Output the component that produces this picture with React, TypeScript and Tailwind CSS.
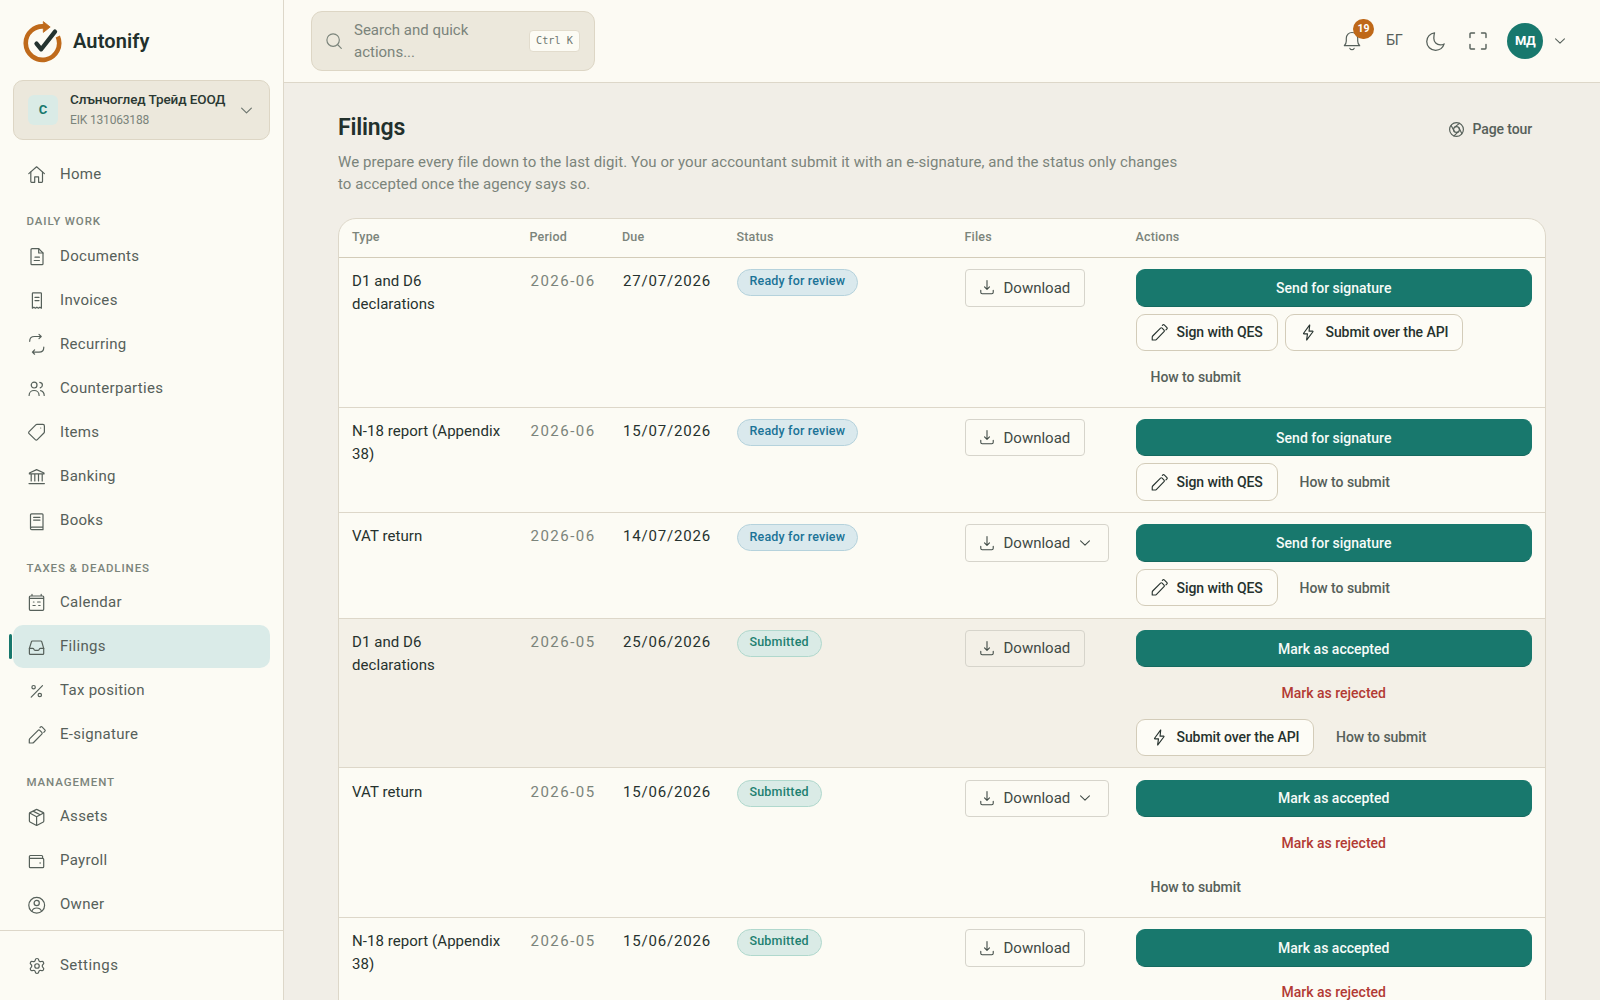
import React from 'react';
import { Settings } from 'lucide-react';

type IconProps = { className?: string; children?: React.ReactNode };

function Icon({ className = 'w-[18px] h-[18px]', children }: IconProps) {
  return (
    <svg
      viewBox="0 0 18 18"
      fill="none"
      stroke="currentColor"
      strokeWidth={1.2}
      strokeLinecap="round"
      strokeLinejoin="round"
      className={`shrink-0 overflow-visible ${className}`}
    >
      {children}
    </svg>
  );
}

const HomeIcon = () => (
  <Icon>
    <path d="M.8 8.6 8.6 1.8l7.8 6.8" />
    <path d="M2.8 7v9.6c0 .4.3.7.7.7h3.2v-5.4h3.9v5.4h3.2c.4 0 .7-.3.7-.7V7" />
  </Icon>
);
const DocumentIcon = () => (
  <Icon>
    <path d="M3 2.7c0-.6.4-1 1-1h6.7L15 6v10.7c0 .6-.4 1-1 1H4c-.6 0-1-.4-1-1z" />
    <path d="M10.7 1.7V6H15M7 10.2h4.4M6.2 13.5h5.2" />
  </Icon>
);
const InvoiceIcon = () => (
  <Icon>
    <path d="M4.4 17.2V2.6c0-.4.3-.7.7-.7h7.6c.4 0 .7.3.7.7v14.6l-1.5-1-1.5 1-1.5-1-1.5 1-1.5-1z" />
    <path d="M7 6.4h4M7 9.6h4" />
  </Icon>
);
const RecurringIcon = () => (
  <Icon>
    <path d="M1.7 6.3c0-3 1.9-4.8 4.8-4.8H13M11-.6l2.2 2.1L11 3.6" />
    <path d="M15.8 12.2c0 3-1.9 4.9-4.8 4.9H4.4M6.6 14.9l-2.2 2.2 2.2 2.1" />
  </Icon>
);
const PeopleIcon = () => (
  <Icon>
    <circle cx="6.1" cy="6.1" r="2.9" />
    <path d="M1.1 16.4c0-3 2.2-4.9 5-4.9s5 1.9 5 4.9M11.8 3.3c1.8.3 2.6 1.4 2.6 2.8s-.8 2.4-2.2 2.8M12.6 11.6c2.2.6 3.6 2.4 3.6 4.8" />
  </Icon>
);
const TagIcon = () => (
  <Icon>
    <path d="M1.1 8.7 7.8 1.9c.3-.3.7-.5 1.1-.5h6c.9 0 1.5.6 1.5 1.5v6c0 .4-.2.8-.5 1.1l-6.6 6.6c-.6.6-1.4.6-2 0l-6.2-6c-.6-.6-.6-1.3 0-1.9z" />
    <path d="M12.7 5h.01" />
  </Icon>
);
const BankIcon = () => (
  <Icon>
    <path d="M1.4 6.9V6l7.2-3.4L16 6v.9zM3.2 7v6.9M6.8 7v6.9M10.5 7v6.9M14.2 7v6.9M1 16.6h15.4" />
  </Icon>
);
const BookIcon = () => (
  <Icon>
    <path d="M2.5 2.9c0-.6.4-1 1-1h10.6c.5 0 .9.4.9.9v14.9H3.7c-.7 0-1.2-.5-1.2-1.2zM2.5 16.4c0-.7.5-1.2 1.2-1.2H15M5.6 5.3h6.4M5.6 8.1h6.4" />
  </Icon>
);
const CalendarIcon = () => (
  <Icon>
    <path d="M1.4 4c0-.6.4-1 1-1h12.3c.6 0 1 .4 1 1v12.3c0 .6-.4 1-1 1H2.4c-.6 0-1-.4-1-1zM1.4 5.3h14.3M4 1.4V3M13.2 1.4V3M5.4 9h.6M9.6 9h2.6M5 12.5h2.2M10.7 12.5h1.4" />
  </Icon>
);
const TrayIcon = () => (
  <Icon>
    <path d="M4.4 3h8.4c.5 0 .8.3 1 .8l1.9 6.6v5c0 .6-.4 1-1 1H2.4c-.6 0-1-.4-1-1v-5l2-6.6c.1-.5.5-.8 1-.8z" />
    <path d="M1.4 10.4h3.4c.5 0 .8.3 1 .7.3.8.7 1.2 1.3 1.2h3c.6 0 1-.4 1.3-1.2.2-.4.5-.7 1-.7h3.3" />
  </Icon>
);
const PercentIcon = () => (
  <Icon>
    <path d="M3.2 15.1 14.5 3.6" />
    <circle cx="5.6" cy="5.2" r="1.7" />
    <circle cx="11.8" cy="13" r="1.7" />
  </Icon>
);
const PenIcon = ({ className }: { className?: string }) => (
  <Icon className={className}>
    <path d="M1.3 17v-3c0-.5.2-1 .5-1.3l8.3-8.3c.5-.5 1.2-.5 1.7 0l2 2c.5.5.5 1.2 0 1.7L5.6 16.5c-.4.4-.8.5-1.3.5z" />
    <path d="M12 1.5l.6-.6c.4-.4 1-.4 1.4 0l2.9 2.9c.4.4.4 1 0 1.4l-1.1 1.1" />
  </Icon>
);
const BoxIcon = () => (
  <Icon>
    <path d="M8.1 1.6 2 4.6c-.4.2-.6.5-.6.9v7.6c0 .4.2.7.6.9l6.1 3.2c.4.2.7.2 1.1 0l6.1-3.2c.3-.2.5-.5.5-.9V5.5c0-.4-.2-.7-.5-.9l-6.1-3c-.4-.2-.7-.2-1.1 0zM1.7 5l6.9 3.7L15.600 5M8.6 8.700v8.600M5 3.1l7.200 3.700" />
  </Icon>
);
const WalletIcon = () => (
  <Icon>
    <path d="M1.4 6.4V4.5c0-.6.4-1 1-1h11.2c.6 0 1 .4 1 1v1.9M1.4 6.4h13.3c.6 0 1 .4 1 1v7.3c0 .6-.4 1-1 1H2.4c-.6 0-1-.4-1-1z" />
    <path d="M12.1 10.9h.01" strokeWidth={1.5} />
  </Icon>
);
const OwnerIcon = () => (
  <Icon>
    <circle cx="8.7" cy="9.3" r="7.9" />
    <circle cx="8.7" cy="7" r="2.6" />
    <path d="M3.9 15.1c.8-2 2.6-3.1 4.8-3.1s4 1.1 4.8 3.1" />
  </Icon>
);
const BoltIcon = ({ className }: { className?: string }) => (
  <Icon className={className}>
    <path d="M10.3 1 3.8 9.8c-.2.3 0 .6.3.6h3.8L7 17l6.7-8.8c.2-.3 0-.6-.3-.6H9.6z" />
  </Icon>
);
const DownloadIcon = () => (
  <Icon className="w-3.5 h-[15px]">
    <path d="M9 0v11.3M5.8 8.1 9 11.4l3.2-3.3M1 12.6v2.6c0 1 .8 1.8 1.8 1.8h12.4c1 0 1.8-.8 1.8-1.8v-2.6" strokeWidth={1.4} />
  </Icon>
);
const Chevron = ({ className = 'w-2.5 h-2.5' }: { className?: string }) => (
  <Icon className={className}>
    <path d="m1 5 8 8 8-8" strokeWidth={1.9} />
  </Icon>
);

const groups = [
  { title: '', items: [{ label: 'Home', icon: HomeIcon }] },
  {
    title: 'DAILY WORK',
    items: [
      { label: 'Documents', icon: DocumentIcon },
      { label: 'Invoices', icon: InvoiceIcon },
      { label: 'Recurring', icon: RecurringIcon },
      { label: 'Counterparties', icon: PeopleIcon },
      { label: 'Items', icon: TagIcon },
      { label: 'Banking', icon: BankIcon },
      { label: 'Books', icon: BookIcon },
    ],
  },
  {
    title: 'TAXES & DEADLINES',
    items: [
      { label: 'Calendar', icon: CalendarIcon },
      { label: 'Filings', icon: TrayIcon },
      { label: 'Tax position', icon: PercentIcon },
      { label: 'E-signature', icon: PenIcon },
    ],
  },
  {
    title: 'MANAGEMENT',
    items: [
      { label: 'Assets', icon: BoxIcon },
      { label: 'Payroll', icon: WalletIcon },
      { label: 'Owner', icon: OwnerIcon },
    ],
  },
];

type Filing = {
  type: string;
  period: string;
  due: string;
  status: 'review' | 'submitted';
  multiple?: boolean;
  highlighted?: boolean;
  actions: ('qes' | 'api' | 'how')[];
};

const filings: Filing[] = [
  { type: 'D1 and D6 declarations', period: '2026-06', due: '27/07/2026', status: 'review', actions: ['qes', 'api', 'how'] },
  { type: 'N-18 report (Appendix 38)', period: '2026-06', due: '15/07/2026', status: 'review', actions: ['qes', 'how'] },
  { type: 'VAT return', period: '2026-06', due: '14/07/2026', status: 'review', multiple: true, actions: ['qes', 'how'] },
  { type: 'D1 and D6 declarations', period: '2026-05', due: '25/06/2026', status: 'submitted', highlighted: true, actions: ['api', 'how'] },
  { type: 'VAT return', period: '2026-05', due: '15/06/2026', status: 'submitted', multiple: true, actions: ['how'] },
  { type: 'N-18 report (Appendix 38)', period: '2026-05', due: '15/06/2026', status: 'submitted', actions: ['how'] },
];

const columns = 'grid grid-cols-[177.5px_92.5px_114.5px_228px_171px_1fr]';

function Logo() {
  return (
    <svg viewBox="0 0 40 42" className="w-10 h-[42px] shrink-0" fill="none">
      <path d="M22 5.6A16.7 16.7 0 1 0 34.8 15.5" stroke="#bf6a1b" strokeWidth="4.6" />
      <path d="M20.3.6 27.2 6 20.3 11.4z" fill="#bf6a1b" stroke="#bf6a1b" strokeWidth=".8" strokeLinejoin="round" />
      <path d="m13.5 22.6 4.7 5.7L32 10.6" stroke="#24332f" strokeWidth="4.3" strokeLinecap="round" strokeLinejoin="round" />
    </svg>
  );
}

function Sidebar() {
  return (
    <aside className="w-[284px] h-full shrink-0 flex flex-col bg-[#fcfbf4] border-r border-[#ddd7c9]">
      <div className="flex items-center gap-2.5 h-20 pl-[23px] pt-1">
        <Logo />
        <span className="-mt-0.5 text-[20px] font-semibold tracking-[0.006em] text-[#22302c]">Autonify</span>
      </div>
      <button className="ml-[13px] w-[257px] h-[60px] shrink-0 flex items-center rounded-[10px] border border-[#ddd6c5] bg-[#ece8dc] pl-3.5 pr-[17px] text-left">
        <span className="w-[30px] h-[30px] flex items-center justify-center rounded-md bg-[#daebe6] text-[13px] font-bold text-[#18786d]">С</span>
        <span lang="bg" className="ml-3 -mt-px flex-1 whitespace-nowrap">
          <span className="block text-[13.5px] leading-[21px] font-medium tracking-[-0.008em] text-[#2a3833]">Слънчоглед Трейд ЕООД</span>
          <span className="block text-xs leading-5 tracking-[-0.014em] text-[#7b847b]">EIK 131063188</span>
        </span>
        <Chevron className="w-[11px] h-[11px] text-[#6d766f]" />
      </button>
      <nav className="flex-1 flex flex-col mt-[13px] ml-[13px] w-[257px]">
        {groups.map((group) => (
          <div key={group.title}>
            {group.title && (
              <p className="h-[39.5px] pt-[18px] pl-[13.5px] text-[11.5px] leading-4 font-medium tracking-[0.078em] text-[#7b847b]">{group.title}</p>
            )}
            <div className="flex flex-col gap-[1.7px]">
              {group.items.map((item) => (
                <a
                  key={item.label}
                  className={`relative h-[42.4px] flex items-center gap-3.5 rounded-[10px] pl-[15px] text-[15px] font-[450] tracking-[0.02em] text-[#56605a] ${
                    item.label === 'Filings' ? 'bg-[#daebe8]' : ''
                  }`}
                >
                  {item.label === 'Filings' && <span className="absolute -left-1 top-[9px] w-[3px] h-[25px] rounded-full bg-[#18786d]" />}
                  <item.icon />
                  <span>{item.label}</span>
                </a>
              ))}
            </div>
          </div>
        ))}
      </nav>
      <div className="h-[70px] shrink-0 border-t border-[#ddd7c9] flex items-center gap-3.5 pl-7 text-[15px] font-[450] tracking-[0.03em] text-[#56605a]">
        <Settings className="w-[18px] h-[18px]" strokeWidth={1.6} />
        <span>Settings</span>
      </div>
    </aside>
  );
}

function Header() {
  return (
    <header className="h-[83px] shrink-0 flex items-center justify-between border-b border-[#ddd7c9] bg-[#fcfaf3] pl-[27px] pr-[35px]">
      <div className="w-[284px] h-[60px] flex items-center rounded-[11px] border border-[#ddd6c5] bg-[#ece8dc] px-3.5">
        <Icon className="w-4 h-4 text-[#7b847b]">
          <circle cx="8" cy="8" r="7" strokeWidth={1.3} />
          <path d="m13.2 13.2 4 4" strokeWidth={1.3} />
        </Icon>
        <span className="ml-3 w-[150px] text-[15px] font-[450] leading-[22.5px] text-[#7b847b]">Search and quick actions...</span>
        <kbd className="ml-auto w-[51px] h-[22px] flex items-center justify-center rounded border border-[#e2dccd] bg-[#fcfbf4] font-['DejaVu_Sans_Mono',monospace] text-[10.2px] text-[#6d766f] whitespace-pre">Ctrl K</kbd>
      </div>
      <div className="flex items-center text-[#56605a]">
        <div className="relative w-[18px] h-[18px]">
          <Icon>
            <path d="M1.3 13.7h15.4c-1.4-1.3-2-2.5-2-4.6V6.3C14.7 3 12.2.5 9 .5S3.3 3 3.3 6.3v2.8c0 2.1-.6 3.3-2 4.6zM6.9 16.4c.4.8 1.1 1.2 2.1 1.2s1.7-.4 2.1-1.2" />
          </Icon>
          <span className="absolute left-2.5 -top-[13px] w-[21px] h-5 flex items-center justify-center rounded-full bg-[#bf6818] text-[10.5px] font-bold text-white">19</span>
        </div>
        <span className="ml-[25px] w-4 text-[14.5px] font-[450] tracking-[-0.02em]">БГ</span>
        <Icon className="ml-6 w-[19px] h-[19px]">
          <path d="M8.1.8C4 1.2.7 4.7.7 8.9c0 4.7 3.7 8.4 8.4 8.4 3.8 0 7-2.5 8.1-6-1.2.7-2.2.9-3.6.9-3.5 0-6.2-2.7-6.2-6.2 0-2 .1-3.5.7-5.2z" />
        </Icon>
        <Icon className="ml-6 w-[18px] h-[18px]">
          <path d="M1 5.5V1.9c0-.5.4-.9.9-.9h3.6M12.5 1h3.6c.5 0 .9.4.9.9v3.6M17 12.5v3.6c0 .5-.4.9-.9.9h-3.6M5.5 17H1.9c-.5 0-.9-.4-.9-.9v-3.6" strokeWidth={1.4} />
        </Icon>
        <span className="ml-5 w-9 h-9 flex items-center justify-center rounded-full bg-[#18786d] text-[13px] font-bold tracking-[-0.05em] text-white">МД</span>
        <Chevron className="ml-3 w-2.5 h-2.5" />
      </div>
    </header>
  );
}

const outlineButton =
  'h-[37.4px] flex items-center gap-[9px] rounded-[9px] border border-[#d3ccb9] bg-[#fdfcf6] px-3.5 text-sm font-medium text-[#26322e]';

function FilingRow({ filing }: { filing: Filing }) {
  const review = filing.status === 'review';
  return (
    <div className={`${columns} border-b border-[#ddd7c9] py-[11.3px] ${filing.highlighted ? 'bg-[#f3f0e7]' : ''}`}>
      <div className="pl-[13px] pr-3 pt-px text-[15px] font-[450] leading-[23px] tracking-[0.004em] text-[#26322e]">{filing.type}</div>
      <div className="pl-3.5 pt-px text-[15px] leading-[23px] tracking-[0.1em] text-[#7b847b]">{filing.period}</div>
      <div className="pl-3.5 pt-px text-[15px] leading-[23px] tracking-[0.055em] text-[#26322e]">{filing.due}</div>
      <div className="pl-[13px]">
        <span
          className={`flex w-fit h-[27px] items-center rounded-full border px-3 text-[12.5px] font-medium tracking-[0.014em] whitespace-nowrap ${
            review ? 'border-[#b5d2dc] bg-[#dae9ed] text-[#1b7397]' : 'border-[#b0d8cd] bg-[#daebe6] text-[#1d8070]'
          }`}
        >
          <span className="-mt-0.5">{review ? 'Ready for review' : 'Submitted'}</span>
        </span>
      </div>
      <div className="pl-[13px]">
        <button
          className={`h-[37.4px] flex items-center gap-2.5 rounded border border-[#d6d4cb] pl-3.5 text-[15px] font-[450] text-[#3f4a45] ${
            filing.multiple ? 'w-36' : 'w-[120px]'
          }`}
        >
          <DownloadIcon />
          <span>Download</span>
          {filing.multiple && <Chevron className="w-2.5 h-2.5" />}
        </button>
      </div>
      <div className="pl-[13px] pr-[13px] flex flex-wrap gap-[7px]">
        <button className="w-full h-[37.4px] rounded-[9px] border border-[#15695f] border-t-[#18786d] border-x-[#18786d] bg-[#18786d] text-sm font-medium text-[#f6fbf8]">
          {review ? 'Send for signature' : 'Mark as accepted'}
        </button>
        {!review && <button className="w-full h-[37.4px] text-sm font-medium text-[#b23a34]">Mark as rejected</button>}
        {filing.actions.map((action) => {
          if (action === 'qes') {
            return (
              <button key={action} className={`${outlineButton} w-[142px]`}>
                <PenIcon className="w-[17px] h-[17px]" />
                <span className="whitespace-nowrap tracking-[-0.005em]">Sign with QES</span>
              </button>
            );
          }
          if (action === 'api') {
            return (
              <button key={action} className={`${outlineButton} w-[178.5px]`}>
                <BoltIcon className="w-[17px] h-[17px]" />
                <span className="whitespace-nowrap tracking-[-0.005em]">Submit over the API</span>
              </button>
            );
          }
          return (
            <button key={action} className="h-[37.4px] px-[15px] text-sm font-medium tracking-[-0.003em] text-[#56605a]">How to submit</button>
          );
        })}
      </div>
    </div>
  );
}

export default function App() {
  return (
    <div className="flex h-screen overflow-hidden bg-[#f1eee7] font-[Roboto,'Noto_Sans',sans-serif]">
      <Sidebar />
      <div className="flex-1 min-w-0 flex flex-col">
        <Header />
        <main className="flex-1 min-h-0 overflow-hidden px-[54px] pt-[30px]">
          <div className="flex items-start justify-between pr-3.5">
            <div>
              <h1 className="text-[23px] leading-[30px] font-semibold tracking-[-0.008em] text-[#22302c]">Filings</h1>
              <p className="mt-[7.5px] w-[850px] text-[15px] leading-[22.5px] tracking-[0.005em] text-[#7b847b]">
                We prepare every file down to the last digit. You or your accountant submit it with an e-signature, and the status only changes to accepted once the agency says so.
              </p>
            </div>
            <button className="mt-1.5 flex items-center gap-[9px] text-sm leading-5 font-medium tracking-[-0.008em] text-[#56605a]">
              <Icon className="w-[15px] h-[15px]">
                <circle cx="9" cy="9" r="8.3" strokeWidth={1.4} />
                <circle cx="9" cy="9" r="3.5" strokeWidth={1.4} />
                <path d="M6.4 11.3 2.6 4.1M6.5 6.5l6-4.9M11.9 7l3.6 7M11 11.9l-5 4.7" strokeWidth={1.4} />
              </Icon>
              Page tour
            </button>
          </div>
          <section className="mt-[22.5px] rounded-t-[18px] border border-[#ddd7c9] bg-[#fcfbf4] overflow-hidden">
            <div className={`${columns} h-[39px] items-center border-b border-[#d3ccb9] pb-0.5 text-[12.5px] font-medium tracking-[0.014em] text-[#7b847b]`}>
              {['Type', 'Period', 'Due', 'Status', 'Files', 'Actions'].map((heading) => (
                <div key={heading} className="pl-[13px]">{heading}</div>
              ))}
            </div>
            {filings.map((filing, index) => (
              <FilingRow key={index} filing={filing} />
            ))}
          </section>
        </main>
      </div>
    </div>
  );
}
